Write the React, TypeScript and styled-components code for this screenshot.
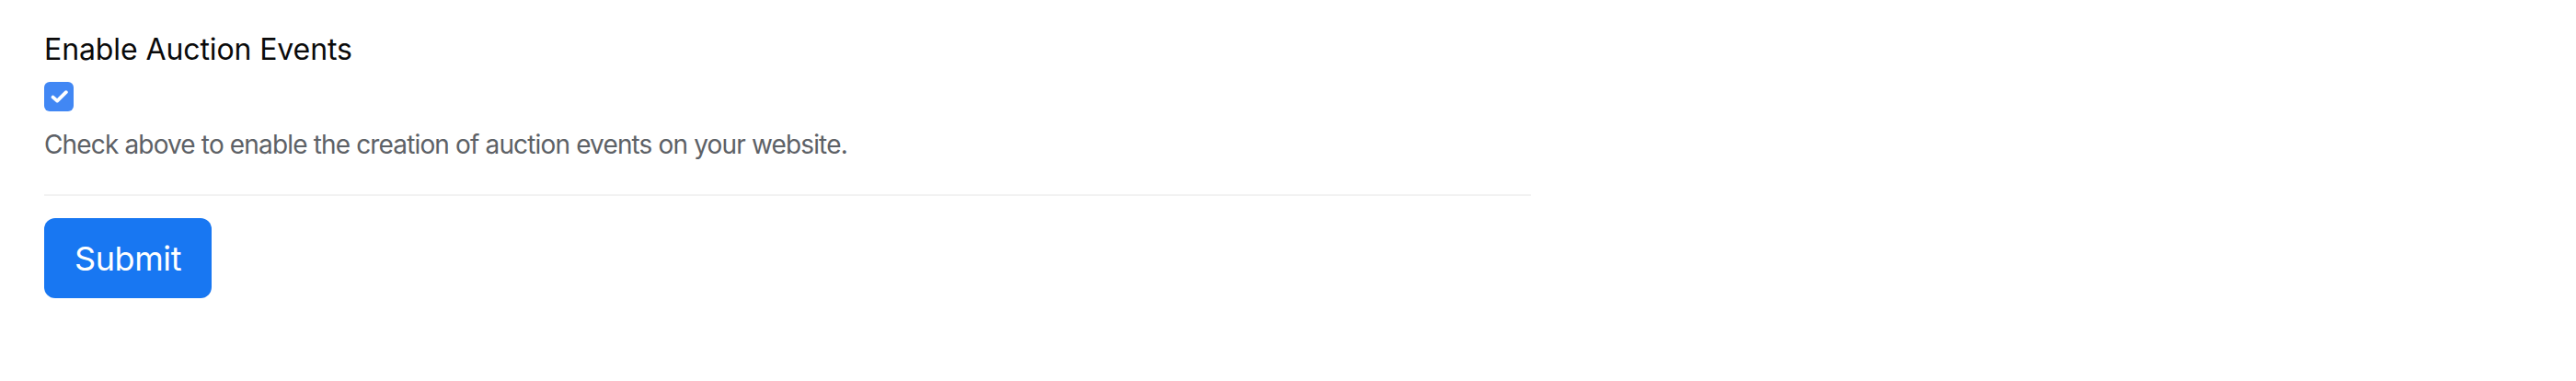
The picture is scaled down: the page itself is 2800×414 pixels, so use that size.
import React, { useState } from "react";
import styled, { createGlobalStyle } from "styled-components";

const GlobalStyle = createGlobalStyle`
  html, body { margin: 0; padding: 0; background: #ffffff; }
  body { font-family: Inter, "Noto Sans", sans-serif; }
`;

const Page = styled.div`
  padding: 30px 48px 40px 48px;
`;

const Form = styled.form`
  width: 1616px;
  display: flex;
  flex-direction: column;
`;

const Field = styled.div`
  display: flex;
  flex-direction: column;
  align-items: flex-start;
`;

const Label = styled.label`
  font-size: 32px;
  line-height: 48px;
  color: #0a0a0a;
  font-weight: 400;
  letter-spacing: -0.1px;
`;

const CheckBox = styled.button<{ $checked: boolean }>`
  margin-top: 11px;
  width: 32px;
  height: 32px;
  padding: 0;
  border: none;
  border-radius: 6px;
  background: ${(p) => (p.$checked ? "#4187f4" : "#ffffff")};
  display: flex;
  align-items: center;
  justify-content: center;
  cursor: pointer;
`;

const Help = styled.p`
  margin: 15px 0 0 0;
  font-size: 28px;
  line-height: 42px;
  color: #5d6166;
  letter-spacing: -0.85px;
`;

const Divider = styled.hr`
  margin: 33px 0 24px 0;
  border: none;
  height: 2px;
  background: #f2f2f2;
  width: 100%;
`;

const SubmitButton = styled.button`
  align-self: flex-start;
  width: 182px;
  height: 87px;
  border: none;
  border-radius: 12px;
  background: #1877f2;
  color: #ffffff;
  font-family: Inter, "Noto Sans", sans-serif;
  font-size: 36px;
  letter-spacing: -0.4px;
  cursor: pointer;
`;

export default function App() {
  const [checked, setChecked] = useState(true);
  return (
    <Page>
      <GlobalStyle />
      <Form onSubmit={(e) => e.preventDefault()}>
        <Field>
          <Label>Enable Auction Events</Label>
          <CheckBox type="button" $checked={checked} onClick={() => setChecked(!checked)}>
            {checked && (
              <svg width="20" height="16" viewBox="0 0 20 16" style={{ marginLeft: 1 }}>
                <path d="M2.6 8.6 L7.2 12.6 L16.8 3.2" fill="none" stroke="#fff" strokeWidth="3.8" strokeLinecap="round" strokeLinejoin="round" />
              </svg>
            )}
          </CheckBox>
          <Help>Check above to enable the creation of auction events on your website.</Help>
        </Field>
        <Divider />
        <SubmitButton type="submit">Submit</SubmitButton>
      </Form>
    </Page>
  );
}
